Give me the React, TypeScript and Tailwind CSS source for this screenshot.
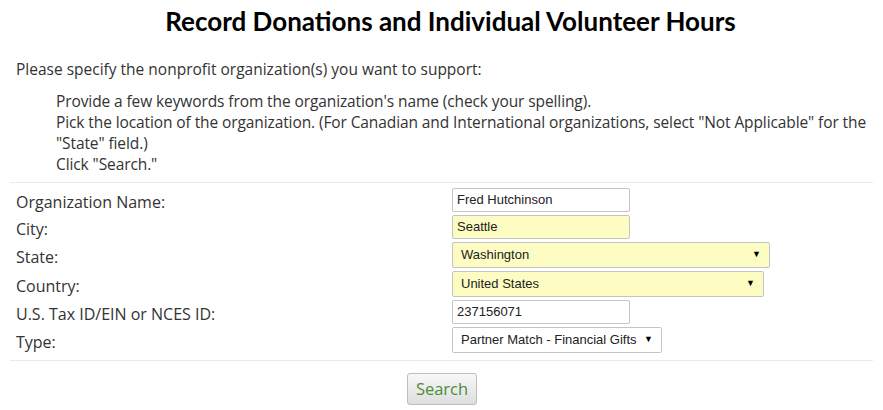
import React from 'react';

const ROWS: { label: string; kind: 'text' | 'select'; value: string; yellow?: boolean; width: string }[] = [
  { label: 'Organization Name:', kind: 'text', value: 'Fred Hutchinson', width: 'w-[178px]' },
  { label: 'City:', kind: 'text', value: 'Seattle', yellow: true, width: 'w-[178px]' },
  { label: 'State:', kind: 'select', value: 'Washington', yellow: true, width: 'w-[318px]' },
  { label: 'Country:', kind: 'select', value: 'United States', yellow: true, width: 'w-[312px]' },
  { label: 'U.S. Tax ID/EIN or NCES ID:', kind: 'text', value: '237156071', width: 'w-[178px]' },
  { label: 'Type:', kind: 'select', value: 'Partner Match - Financial Gifts', width: 'w-[210px]' },
];

function Field({ row }: { row: (typeof ROWS)[number] }) {
  const bg = row.yellow ? 'bg-[#fdfdc3]' : 'bg-white';
  if (row.kind === 'text') {
    return (
      <div
        className={`${row.width} h-[24px] ${bg} border border-[#c4c4c4] rounded-[2px] px-[4px] flex items-center text-[13px] text-[#222] font-['Liberation_Sans',Arial,sans-serif]`}
      >
        {row.value}
      </div>
    );
  }
  return (
    <div
      className={`${row.width} h-[26px] ${bg} border border-[#c4c4c4] rounded-[2px] pl-[8px] pr-[8px] flex items-center justify-between text-[13px] text-[#222] font-['Liberation_Sans',Arial,sans-serif]`}
    >
      <span>{row.value}</span>
      <span className="text-[9px] text-black">▼</span>
    </div>
  );
}

export default function App() {
  return (
    <div className="w-[883px] h-[410px] bg-white text-[#333] font-['Open_Sans',sans-serif] overflow-hidden">
      <h1 className="text-center text-[26px] font-bold text-black pt-[5px] pl-[18px] leading-[32px] font-['Lato',sans-serif]">
        Record Donations and Individual Volunteer Hours
      </h1>

      <p className="px-[16px] mt-[22px] text-[15.5px] leading-[21px]">
        Please specify the nonprofit organization(s) you want to support:
      </p>
      <div className="pl-[56px] pr-[4px] mt-[11px] text-[15.5px] tracking-[-0.1px] leading-[21px]">
        <div>Provide a few keywords from the organization's name (check your spelling).</div>
        <div>
          Pick the location of the organization. (For Canadian and International organizations, select "Not
          Applicable" for the "State" field.)
        </div>
        <div>Click "Search."</div>
      </div>

      <div className="mx-[10px] mt-[7px] border-t border-b border-[#eaeaea] pt-[5px] pb-[7px] flex flex-col gap-[3px]">
        {ROWS.map((row) => (
          <div key={row.label} className="flex items-center">
            <div className="w-[442px] pl-[6px] text-[16px] leading-[20px] pt-[3px]">{row.label}</div>
            <Field row={row} />
          </div>
        ))}
      </div>

      <div className="flex justify-center mt-[12px]">
        <button className="ml-[1px] h-[32px] px-[8px] rounded-[3px] border border-[#bdbdbd] bg-gradient-to-b from-[#f8f8f8] to-[#dedede] text-[#4a8c3a] text-[16.5px]">
          Search
        </button>
      </div>
    </div>
  );
}
